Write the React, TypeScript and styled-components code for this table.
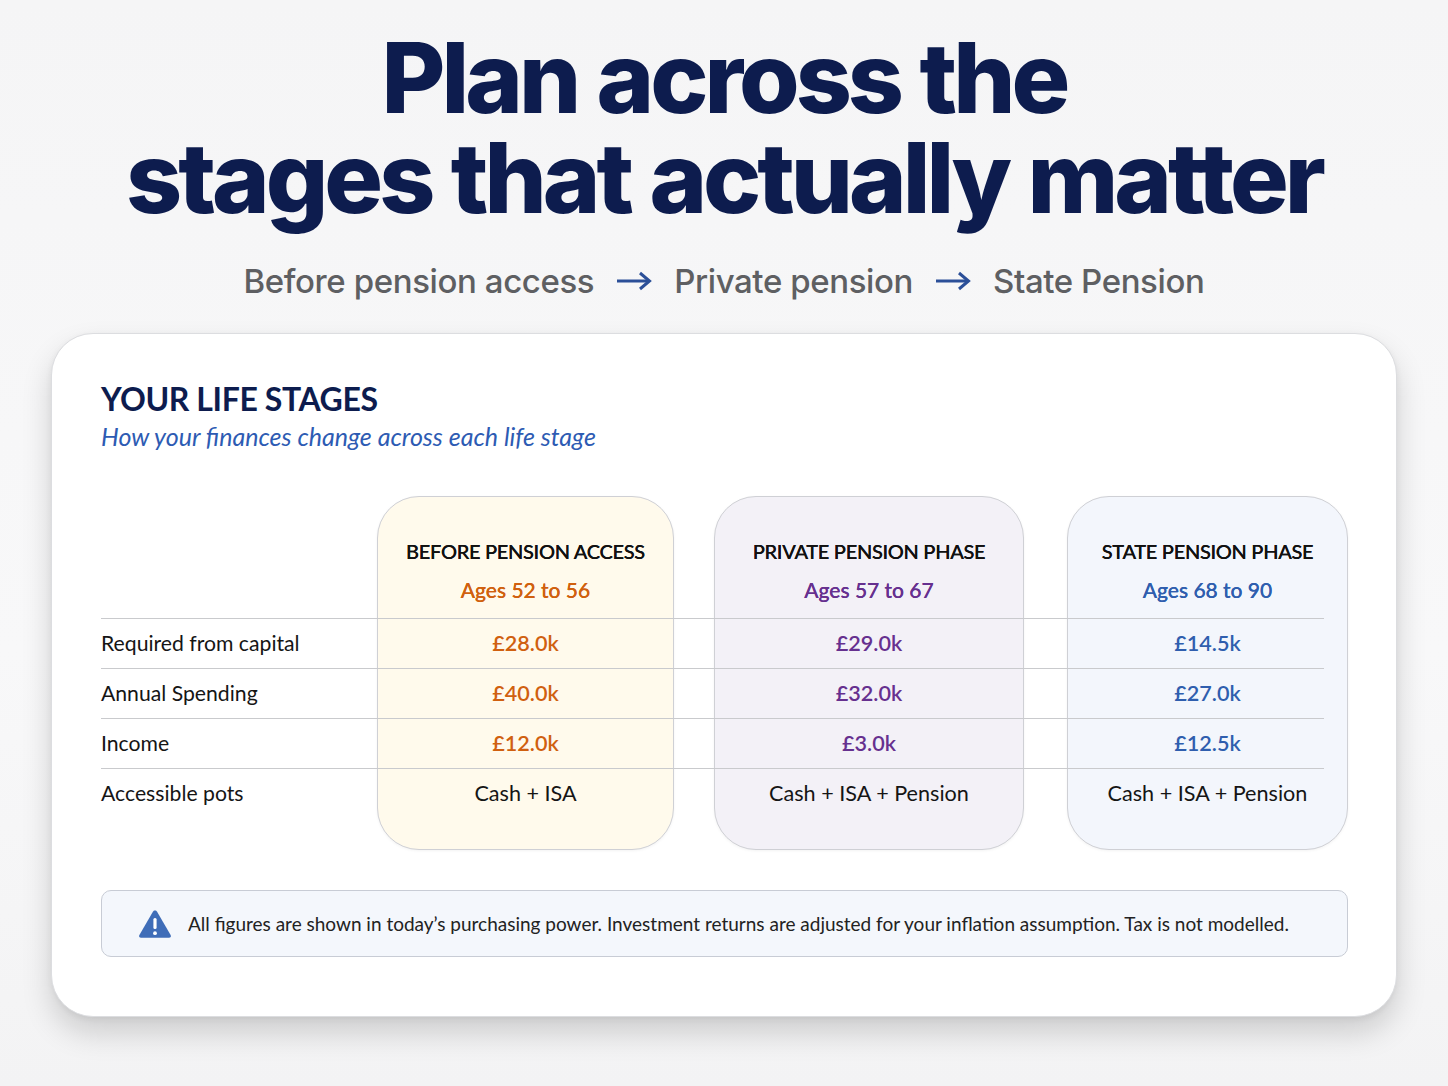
import React from "react";
import styled, { createGlobalStyle } from "styled-components";

const GlobalStyle = createGlobalStyle`
  html, body {
    margin: 0;
    padding: 0;
  }
  body {
    background: linear-gradient(180deg, #f5f5f6 0%, #f8f8f9 60%, #f3f3f4 100%);
    font-family: Lato, "Noto Sans", sans-serif;
    color: #111;
  }
`;

type Tone = "orange" | "purple" | "blue";

const toneText: Record<Tone, string> = {
  orange: "#d0600f",
  purple: "#66308f",
  blue: "#2f5eae",
};

const toneBg: Record<Tone, string> = {
  orange: "#fffaec",
  purple: "#f3f1f7",
  blue: "#f3f6fc",
};

const Page = styled.div`
  width: 1448px;
  min-height: 1086px;
  display: flex;
  flex-direction: column;
  align-items: center;
  box-sizing: border-box;
  padding-top: 28px;
`;

const Headline = styled.h1`
  margin: 0;
  font-family: Inter, "Noto Sans", sans-serif;
  font-weight: 800;
  font-size: 98px;
  line-height: 100px;
  letter-spacing: -4px;
  word-spacing: 2px;
  color: #0d1c4e;
  text-align: center;
`;

const Flow = styled.div`
  display: flex;
  align-items: center;
  gap: 22px;
  margin-top: 33px;
  font-family: Inter, "Noto Sans", sans-serif;
  font-weight: 500;
  font-size: 33px;
  line-height: 40px;
  color: #5e5f62;
  letter-spacing: -0.4px;
`;

const ArrowIcon = () => (
  <svg width="36" height="22" viewBox="0 0 36 22">
    <path d="M1 11 H33" stroke="#2b4f98" strokeWidth="3" fill="none" />
    <path d="M24 3 L33.5 11 L24 19" stroke="#2b4f98" strokeWidth="3" fill="none" strokeLinejoin="miter" />
  </svg>
);

const Card = styled.section`
  width: 1346px;
  margin-top: 32px;
  box-sizing: border-box;
  background: #ffffff;
  border: 1px solid #dcdde0;
  border-radius: 42px;
  box-shadow: 0 16px 30px rgba(0, 0, 0, 0.16), 0 2px 6px rgba(0, 0, 0, 0.06);
  padding: 45px 48px 59px 49px;
`;

const CardTitle = styled.h2`
  margin: 0;
  font-size: 32px;
  font-weight: 700;
  color: #0d1c4e;
  letter-spacing: -0.4px;
  line-height: 40px;
`;

const CardSubtitle = styled.p`
  margin: 2px 0 0;
  font-size: 25px;
  font-style: italic;
  color: #2d5bb3;
  line-height: 30px;
`;

const Table = styled.div`
  margin-top: 45px;
  display: grid;
  grid-template-columns: 276px 297px 40px 310px 43px 281px;
  grid-template-rows: 122px 50px 50px 50px 50px 32px;
`;

const StageCard = styled.div<{ $tone: Tone; $col: number }>`
  grid-column: ${(p) => p.$col};
  grid-row: 1 / -1;
  background: ${(p) => toneBg[p.$tone]};
  border: 1.5px solid #cfd0d5;
  border-radius: 42px;
  box-shadow: 0 1px 3px rgba(0, 0, 0, 0.05);
`;

const StageHead = styled.div<{ $col: number }>`
  grid-column: ${(p) => p.$col};
  grid-row: 1;
  z-index: 1;
  display: flex;
  flex-direction: column;
  align-items: center;
  padding-top: 43px;
  gap: 14px;
`;

const StageName = styled.div`
  font-size: 20px;
  font-weight: 500;
  color: #111;
  letter-spacing: -0.3px;
  line-height: 24px;
  text-shadow: 0 0 0.4px #111;
`;

const StageAges = styled.div<{ $tone: Tone }>`
  font-size: 21px;
  font-weight: 500;
  color: ${(p) => toneText[p.$tone]};
  line-height: 26px;
  text-shadow: 0 0 0.4px ${(p) => toneText[p.$tone]};
`;

const RowLine = styled.div<{ $row: number }>`
  grid-column: 1 / -1;
  grid-row: ${(p) => p.$row};
  border-top: 1.5px solid #c9cacd;
  margin-right: 24px;
  z-index: 2;
`;

const Label = styled.div<{ $row: number }>`
  grid-column: 1;
  grid-row: ${(p) => p.$row};
  display: flex;
  align-items: center;
  font-size: 21.2px;
  color: #151515;
  z-index: 1;
`;

const Value = styled.div<{ $row: number; $col: number; $tone?: Tone }>`
  grid-column: ${(p) => p.$col};
  grid-row: ${(p) => p.$row};
  display: flex;
  align-items: center;
  justify-content: center;
  font-size: 21.6px;
  font-weight: ${(p) => (p.$tone ? 600 : 400)};
  color: ${(p) => (p.$tone ? toneText[p.$tone] : "#151515")};
  z-index: 1;
`;

const Note = styled.div`
  margin-top: 40px;
  height: 67px;
  box-sizing: border-box;
  display: flex;
  align-items: center;
  gap: 16px;
  padding: 0 36px;
  background: #f4f7fc;
  border: 1.5px solid #c8ccd5;
  border-radius: 10px;
  font-size: 19px;
  color: #222;
`;

const stages: { col: number; tone: Tone; name: string; ages: string }[] = [
  { col: 2, tone: "orange", name: "BEFORE PENSION ACCESS", ages: "Ages 52 to 56" },
  { col: 4, tone: "purple", name: "PRIVATE PENSION PHASE", ages: "Ages 57 to 67" },
  { col: 6, tone: "blue", name: "STATE PENSION PHASE", ages: "Ages 68 to 90" },
];

const rows: { label: string; values: string[]; coloured: boolean }[] = [
  { label: "Required from capital", values: ["£28.0k", "£29.0k", "£14.5k"], coloured: true },
  { label: "Annual Spending", values: ["£40.0k", "£32.0k", "£27.0k"], coloured: true },
  { label: "Income", values: ["£12.0k", "£3.0k", "£12.5k"], coloured: true },
  { label: "Accessible pots", values: ["Cash + ISA", "Cash + ISA + Pension", "Cash + ISA + Pension"], coloured: false },
];

const WarningIcon = () => (
  <svg width="34" height="30" viewBox="0 0 34 30">
    <path
      d="M17 1.5 C18 1.5 18.6 2 19.1 2.8 L32.6 26 C33.4 27.5 32.6 28.8 30.9 28.8 L3.1 28.8 C1.4 28.8 0.6 27.5 1.4 26 L14.9 2.8 C15.4 2 16 1.5 17 1.5 Z"
      fill="#3f6db8"
    />
    <rect x="15.4" y="9" width="3.2" height="11" rx="1.5" fill="#ffffff" />
    <circle cx="17" cy="24.2" r="1.9" fill="#ffffff" />
  </svg>
);

export default function App() {
  return (
    <>
      <GlobalStyle />
      <Page>
        <Headline>
          Plan across the
          <br />
          stages that actually matter
        </Headline>
        <Flow>
          <span>Before pension access</span>
          <ArrowIcon />
          <span>Private pension</span>
          <ArrowIcon />
          <span>State Pension</span>
        </Flow>
        <Card>
          <CardTitle>YOUR LIFE STAGES</CardTitle>
          <CardSubtitle>How your finances change across each life stage</CardSubtitle>
          <Table>
            {stages.map((s) => (
              <StageCard key={`bg-${s.col}`} $tone={s.tone} $col={s.col} />
            ))}
            {stages.map((s) => (
              <StageHead key={`h-${s.col}`} $col={s.col}>
                <StageName>{s.name}</StageName>
                <StageAges $tone={s.tone}>{s.ages}</StageAges>
              </StageHead>
            ))}
            {rows.map((r, i) => (
              <React.Fragment key={r.label}>
                <RowLine $row={i + 2} />
                <Label $row={i + 2}>{r.label}</Label>
                {r.values.map((v, j) => (
                  <Value
                    key={j}
                    $row={i + 2}
                    $col={stages[j].col}
                    $tone={r.coloured ? stages[j].tone : undefined}
                  >
                    {v}
                  </Value>
                ))}
              </React.Fragment>
            ))}
          </Table>
          <Note>
            <WarningIcon />
            <span>
              All figures are shown in today’s purchasing power. Investment returns are adjusted for your
              inflation assumption. Tax is not modelled.
            </span>
          </Note>
        </Card>
      </Page>
    </>
  );
}
